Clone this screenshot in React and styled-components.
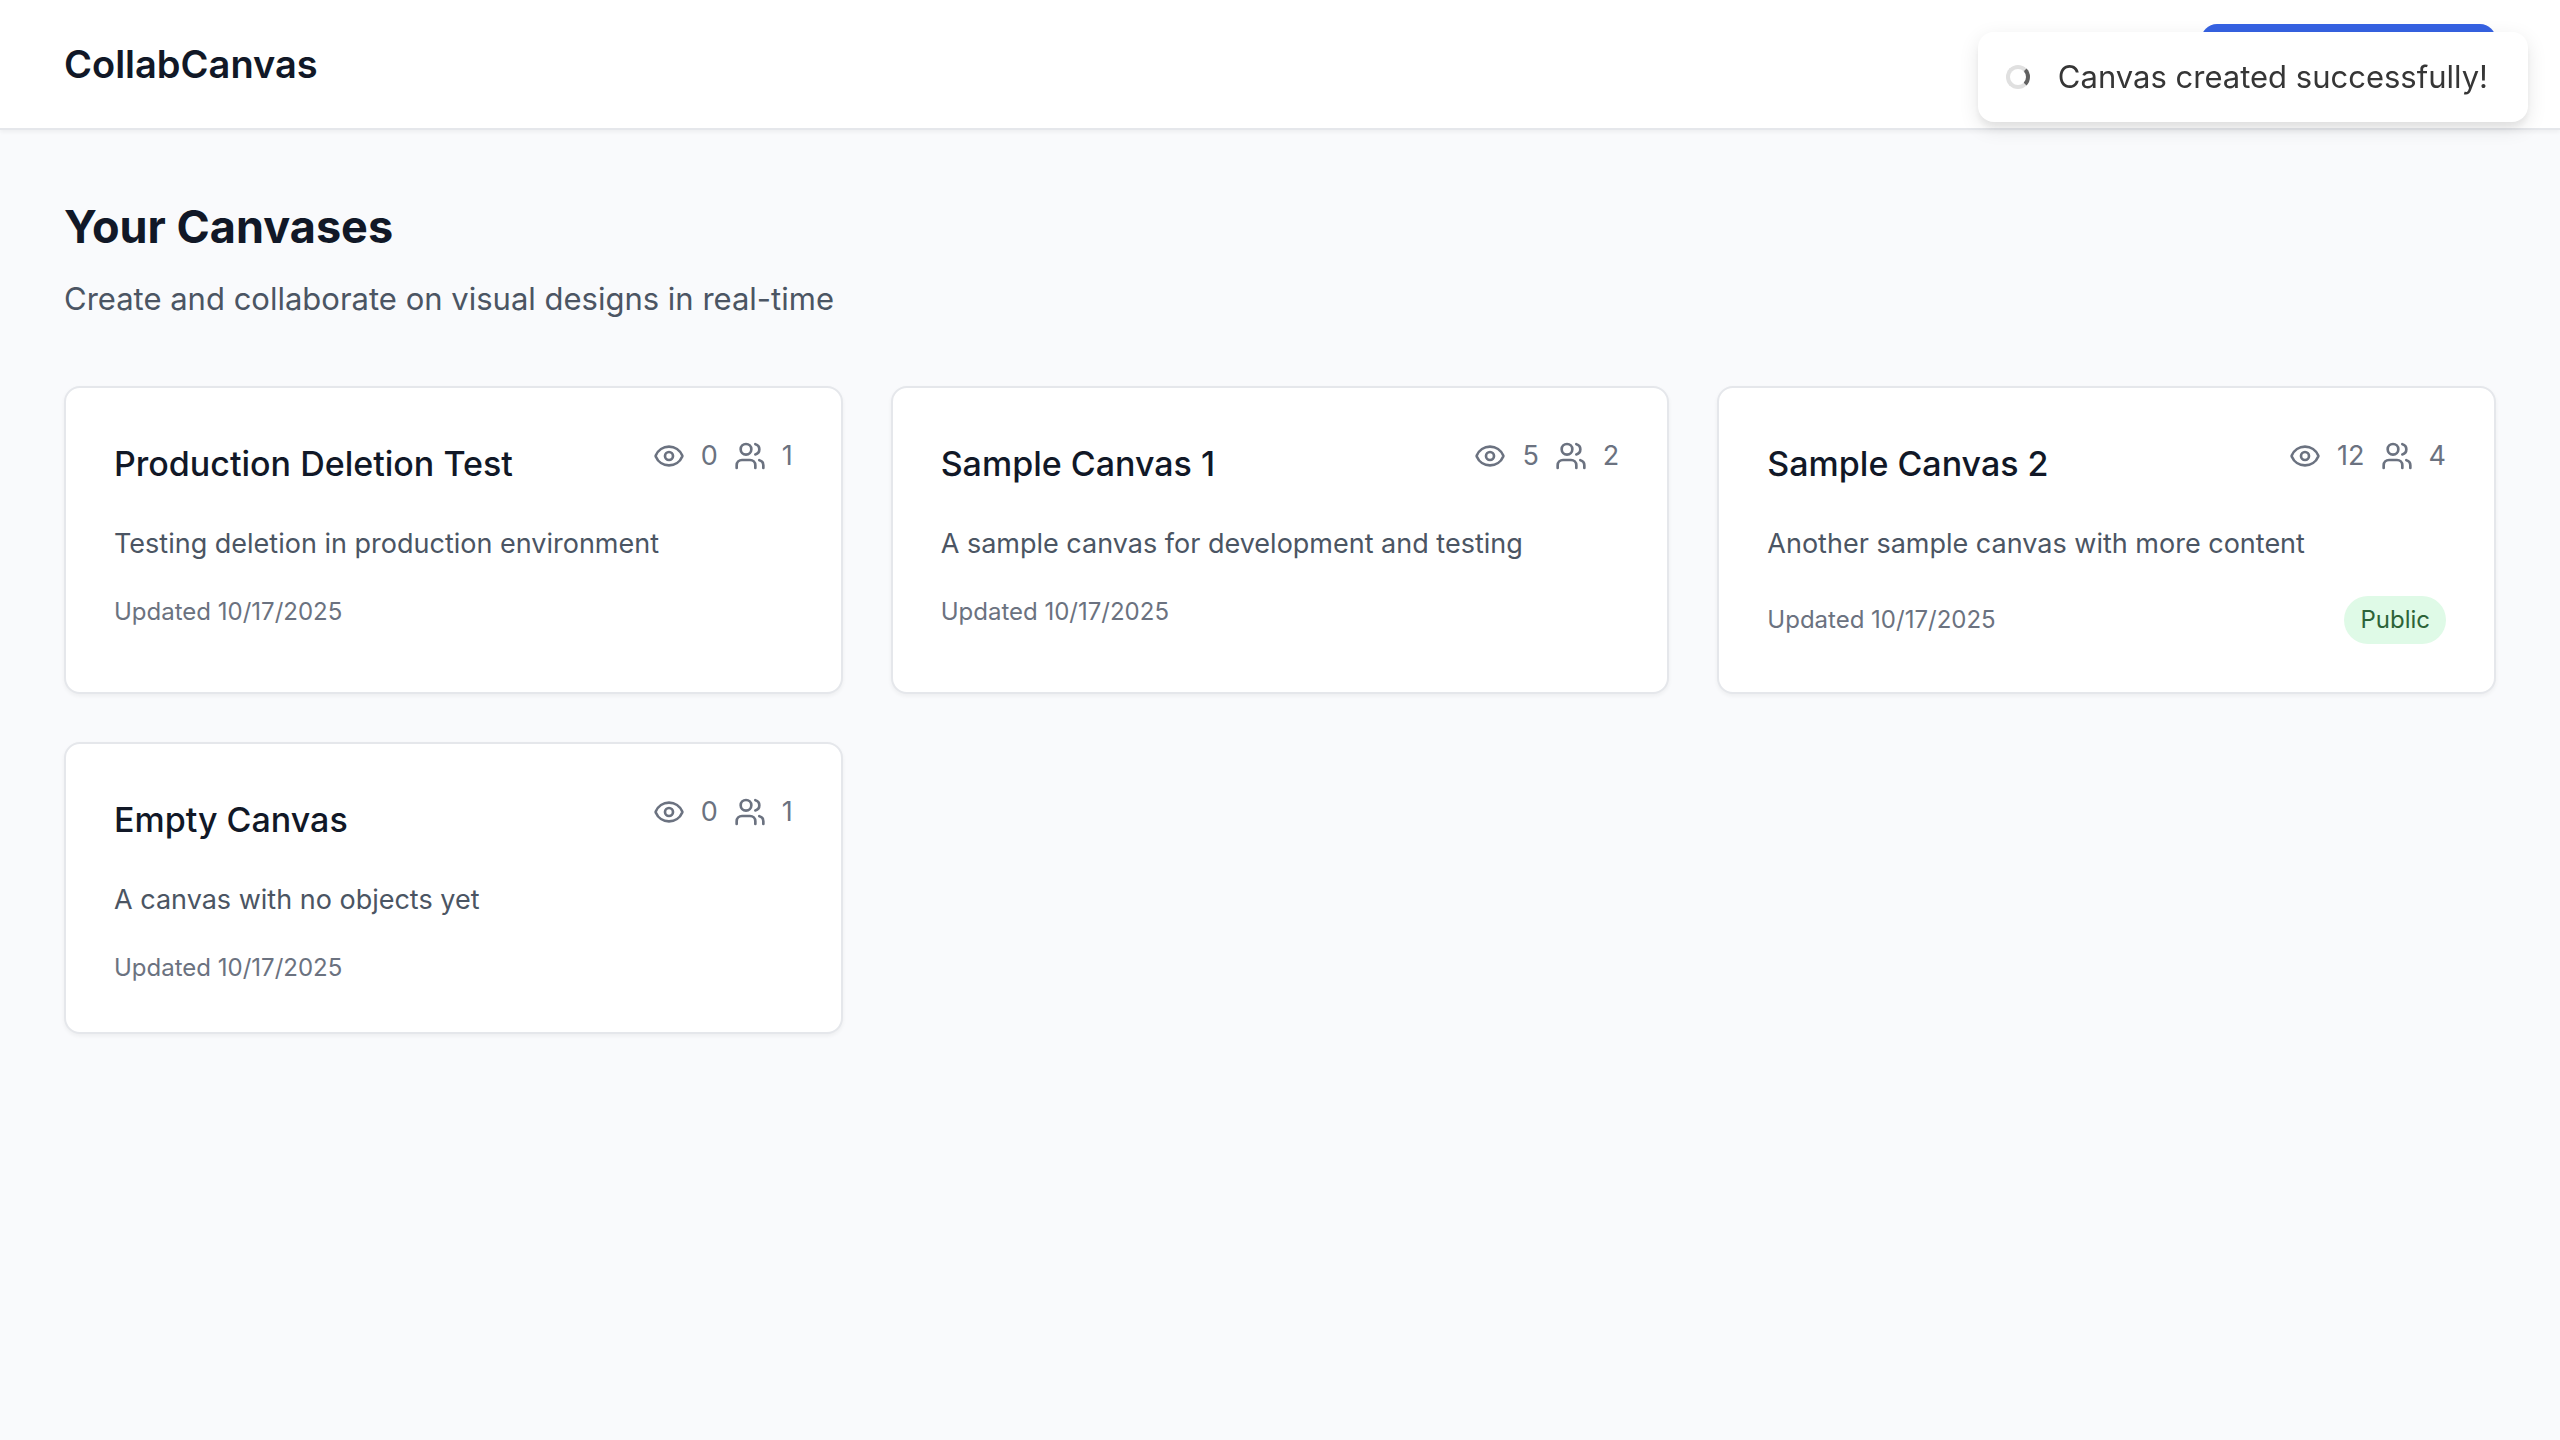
import React from "react";
import styled, { createGlobalStyle, keyframes } from "styled-components";
import { Eye, Plus, Users } from "lucide-react";

const GlobalStyle = createGlobalStyle`
  *, *::before, *::after { box-sizing: border-box; }
  body {
    margin: 0;
    background: #f9fafc;
    color: #111827;
    font-family: Inter, "Liberation Sans", sans-serif;
    font-size: 31px;
    line-height: 48px;
    -webkit-font-smoothing: antialiased;
  }
  h1, h2, h3, p, ul { margin: 0; padding: 0; }
`;

const Header = styled.header`
  display: flex;
  align-items: center;
  justify-content: space-between;
  padding: 24px 64px;
  background: #ffffff;
  border-bottom: 2px solid #e5e7eb;
  box-shadow: 0 2px 4px rgba(0, 0, 0, 0.05);
`;

const Brand = styled.h1`
  font-size: 38px;
  line-height: 56px;
  font-weight: 600;
`;

const CreateButton = styled.button`
  display: flex;
  align-items: center;
  justify-content: center;
  gap: 16px;
  height: 80px;
  min-width: 295px;
  padding: 0 32px;
  border: 0;
  border-radius: 16px;
  background: #3662e3;
  color: #ffffff;
  font: inherit;
  font-size: 27px;
  font-weight: 500;
  cursor: pointer;
`;

const Main = styled.main`
  padding: 65px 64px;
`;

const Intro = styled.section`
  display: grid;
  gap: 16px;
  margin-bottom: 63px;
`;

const PageTitle = styled.h2`
  font-size: 45px;
  line-height: 64px;
  font-weight: 700;
`;

const Lead = styled.p`
  color: #4b5563;
`;

const CardGrid = styled.ul`
  display: grid;
  grid-template-columns: repeat(3, minmax(0, 1fr));
  gap: 48px;
  list-style: none;
`;

const Card = styled.li`
  display: flex;
  flex-direction: column;
  gap: 32px;
  padding: 48px;
  background: #ffffff;
  border: 2px solid #e5e7eb;
  border-radius: 16px;
  box-shadow: 0 2px 4px rgba(0, 0, 0, 0.05);
`;

const CardHead = styled.div`
  display: flex;
  align-items: flex-start;
  justify-content: space-between;
`;

const CardTitle = styled.h3`
  font-size: 34px;
  line-height: 56px;
  font-weight: 500;
`;

const Stats = styled.div`
  display: flex;
  align-items: center;
  gap: 16px;
  color: #6b7280;
  font-size: 27px;
  line-height: 40px;
`;

const Description = styled.p`
  color: #4b5563;
  font-size: 27px;
  line-height: 40px;
`;

const CardFoot = styled.div`
  display: flex;
  align-items: center;
  justify-content: space-between;
  color: #6b7280;
  font-size: 24px;
  line-height: 32px;
`;

const Badge = styled.span`
  padding: 8px 16px;
  border-radius: 24px;
  background: #dffae7;
  color: #2c6338;
`;

const Toast = styled.div`
  position: fixed;
  top: 32px;
  right: 32px;
  display: flex;
  align-items: center;
  padding: 16px 20px;
  border-radius: 16px;
  background: #ffffff;
  color: #363636;
  line-height: 42px;
  box-shadow: 0 6px 20px rgba(0, 0, 0, 0.1), 0 6px 6px rgba(0, 0, 0, 0.05);
`;

const ToastIcon = styled.span`
  display: flex;
  justify-content: center;
  width: 40px;
`;

const spin = keyframes`
  from { transform: rotate(0deg); }
  to { transform: rotate(360deg); }
`;

const Spinner = styled.span`
  width: 24px;
  height: 24px;
  border: 4px solid #e0e0e0;
  border-right-color: #616161;
  border-radius: 50%;
  animation: ${spin} 1s linear infinite paused;
`;

const ToastMessage = styled.span`
  padding: 8px 20px;
`;

const canvases = [
  { title: "Production Deletion Test", description: "Testing deletion in production environment", views: 0, people: 1 },
  { title: "Sample Canvas 1", description: "A sample canvas for development and testing", views: 5, people: 2 },
  { title: "Sample Canvas 2", description: "Another sample canvas with more content", views: 12, people: 4, isPublic: true },
  { title: "Empty Canvas", description: "A canvas with no objects yet", views: 0, people: 1 },
];

function CanvasCard({ title, description, views, people, isPublic }) {
  return (
    <Card>
      <CardHead>
        <CardTitle>{title}</CardTitle>
        <Stats>
          <Eye size={32} />
          <span>{views}</span>
          <Users size={32} />
          <span>{people}</span>
        </Stats>
      </CardHead>
      <Description>{description}</Description>
      <CardFoot>
        <span>Updated 10/17/2025</span>
        {isPublic && <Badge>Public</Badge>}
      </CardFoot>
    </Card>
  );
}

export default function App() {
  return (
    <>
      <GlobalStyle />
      <Header>
        <Brand>CollabCanvas</Brand>
        <CreateButton type="button" aria-label="New Canvas">
          <Plus size={32} />
        </CreateButton>
      </Header>
      <Main>
        <Intro>
          <PageTitle>Your Canvases</PageTitle>
          <Lead>Create and collaborate on visual designs in real-time</Lead>
        </Intro>
        <CardGrid>
          {canvases.map((canvas) => (
            <CanvasCard key={canvas.title} {...canvas} />
          ))}
        </CardGrid>
      </Main>
      <Toast role="status">
        <ToastIcon>
          <Spinner />
        </ToastIcon>
        <ToastMessage>Canvas created successfully!</ToastMessage>
      </Toast>
    </>
  );
}
